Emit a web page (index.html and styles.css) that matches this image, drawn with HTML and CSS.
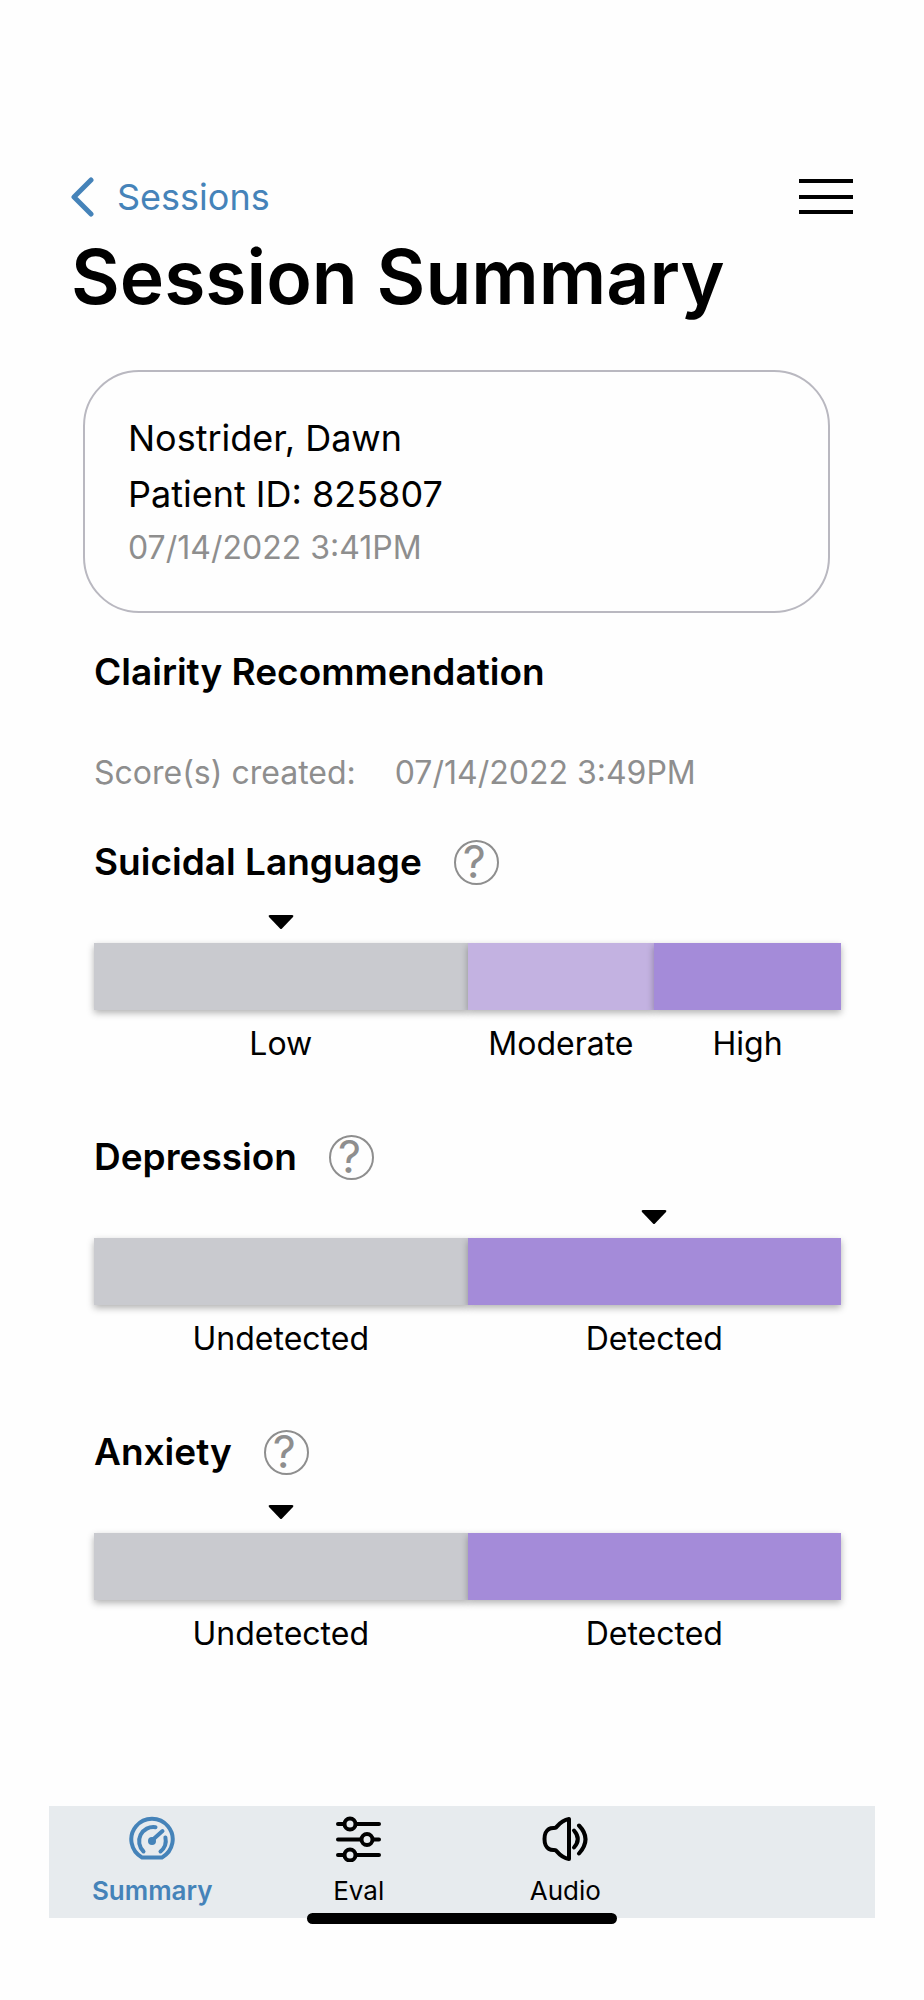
FILE: index.html
```html
<!DOCTYPE html>
<html lang="en">
<head>
<meta charset="utf-8">
<meta name="viewport" content="width=device-width, initial-scale=1">
<title>Session Summary</title>
<link rel="stylesheet" href="styles.css">
</head>
<body>
<div class="screen">
  <header class="header">
    <div class="header-row">
      <a class="back" href="#">
        <svg class="back-icon" viewBox="0 0 24 40" aria-hidden="true"><path d="M20 3 3 20l17 17"/></svg>
        Sessions
      </a>
      <button class="menu" type="button" aria-label="Menu">
        <svg class="menu-icon" viewBox="0 0 54 38" aria-hidden="true"><path d="M0 3h54M0 19h54M0 34h54"/></svg>
      </button>
    </div>
    <h1 class="title">Session Summary</h1>
  </header>

  <main class="content">
    <section class="patient">
      <p class="patient-line">Nostrider, Dawn</p>
      <p class="patient-line">Patient ID: 825807</p>
      <p class="patient-date">07/14/2022 3:41PM</p>
    </section>

    <section class="report">
      <h2 class="heading">Clairity Recommendation</h2>
      <p class="created"><span>Score(s) created:</span><span>07/14/2022 3:49PM</span></p>

      <div class="metrics">
        <section class="metric">
          <div class="metric-head">
            <h3 class="heading">Suicidal Language</h3>
            <button class="help" type="button" aria-label="About Suicidal Language">?</button>
          </div>
          <div class="scale scale-three">
            <svg class="marker" viewBox="0 0 26 16" aria-hidden="true"><path d="M2 1h22q2 0 1 2L14 14.500q-1 1-2 0L1 3q-1-2 1-2z"/></svg>
            <span class="band band-low"></span>
            <span class="band band-mid"></span>
            <span class="band band-high"></span>
            <span class="label">Low</span>
            <span class="label">Moderate</span>
            <span class="label">High</span>
          </div>
        </section>

        <section class="metric">
          <div class="metric-head">
            <h3 class="heading">Depression</h3>
            <button class="help" type="button" aria-label="About Depression">?</button>
          </div>
          <div class="scale scale-two">
            <svg class="marker marker-second" viewBox="0 0 26 16" aria-hidden="true"><path d="M2 1h22q2 0 1 2L14 14.500q-1 1-2 0L1 3q-1-2 1-2z"/></svg>
            <span class="band band-low"></span>
            <span class="band band-high"></span>
            <span class="label">Undetected</span>
            <span class="label">Detected</span>
          </div>
        </section>

        <section class="metric">
          <div class="metric-head">
            <h3 class="heading">Anxiety</h3>
            <button class="help" type="button" aria-label="About Anxiety">?</button>
          </div>
          <div class="scale scale-two">
            <svg class="marker" viewBox="0 0 26 16" aria-hidden="true"><path d="M2 1h22q2 0 1 2L14 14.500q-1 1-2 0L1 3q-1-2 1-2z"/></svg>
            <span class="band band-low"></span>
            <span class="band band-high"></span>
            <span class="label">Undetected</span>
            <span class="label">Detected</span>
          </div>
        </section>
      </div>
    </section>
  </main>

  <nav class="tabs" aria-label="Session">
    <a class="tab tab-active" href="#" aria-current="page">
      <svg class="tab-icon" viewBox="0 0 46 46" aria-hidden="true">
        <path d="M13 41.500A20.700 20.700 0 1 1 33 41.500z"/>
        <path d="M14.500 35.500A14.200 14.200 0 0 1 26.500 11.200M36.400 21.500A14.200 14.200 0 0 1 31.500 35.500M24 23.500l9.500-8.500"/>
        <circle class="solid" cx="23" cy="25" r="4"/>
      </svg>
      Summary
    </a>
    <a class="tab" href="#">
      <svg class="tab-icon" viewBox="0 0 46 46" aria-hidden="true">
        <path d="M2 8h6M20 8h23M2 23.500h23M37 23.500h6M2 39h6M20 39h23"/>
        <circle cx="14" cy="8" r="5.500"/><circle cx="31" cy="23.500" r="5.500"/><circle cx="14" cy="39" r="5.500"/>
      </svg>
      Eval
    </a>
    <a class="tab" href="#">
      <svg class="tab-icon" viewBox="0 0 46 46" aria-hidden="true">
        <path d="M27 3v40C20 42 17 38 14 34.500c-1.500-1-4 .5-7-1.500-3-2-4.500-4-4.500-10S4 15 7 13c3-2 5.500-.5 7-1.500C17 8 20 4 27 3z"/>
        <path d="M32 14.500q7.500 8.500 0 17"/><path d="M37 9.500q13 13.500 0 28"/>
      </svg>
      Audio
    </a>
    <span class="home-indicator"></span>
  </nav>
</div>
</body>
</html>
```
FILE: styles.css
```css
* {
  box-sizing: border-box;
}

body {
  margin: 0;
  background: #fefefe;
  color: #000;
  font-family: Inter, "Liberation Sans", sans-serif;
}

h1, h2, h3, p {
  margin: 0;
}

button {
  border: 0;
  padding: 0;
  background: none;
  font-family: inherit;
  cursor: pointer;
}

a {
  color: inherit;
  text-decoration: none;
}

svg {
  display: block;
  fill: none;
  stroke: currentColor;
}

.screen {
  display: flex;
  flex-direction: column;
  min-height: 100vh;
  padding: 169px 49px 82px;
}

.header {
  display: flex;
  flex-direction: column;
  gap: 8px;
  padding: 0 22px;
}

.header-row {
  display: flex;
  align-items: center;
  justify-content: space-between;
  height: 56px;
}

.back {
  display: flex;
  align-items: center;
  gap: 22px;
  color: #4583b9;
  font-size: 36px;
}

.back-icon {
  width: 24px;
  height: 40px;
  stroke-width: 5;
  stroke-linecap: round;
  stroke-linejoin: round;
}

.menu-icon {
  width: 54px;
  height: 38px;
  stroke-width: 4;
}

.title {
  font-size: 75px;
  font-weight: 600;
  line-height: 88px;
}

.content {
  padding: 49px 34px 0;
}

.patient {
  margin-right: 11px;
  padding: 38px 43px 37px;
  border: 2px solid #b9b8c0;
  border-radius: 56px;
}

.patient-line {
  font-size: 36px;
  line-height: 56px;
}

.patient-date {
  color: #8e8e8e;
  font-size: 32px;
  line-height: 52px;
}

.report {
  padding: 36px 0 0 11px;
}

.heading {
  font-size: 37px;
  font-weight: 600;
  line-height: 46px;
}

.created {
  display: flex;
  gap: 39px;
  margin-top: 54px;
  color: #8e8e8e;
  font-size: 32px;
  line-height: 48px;
}

.metrics {
  display: flex;
  flex-direction: column;
  gap: 69px;
  margin-top: 42px;
}

.metric-head {
  display: flex;
  align-items: center;
  gap: 32px;
}

.help {
  display: flex;
  align-items: center;
  justify-content: center;
  width: 45px;
  height: 45px;
  padding-right: 4px;
  border: 2px solid #8e8e8e;
  border-radius: 50%;
  color: #8e8e8e;
  font-size: 45px;
  line-height: 40px;
}

.scale {
  display: grid;
  grid-template-rows: 16px 67px 42px;
  row-gap: 13px;
  margin-top: 29px;
}

.scale-three {
  grid-template-columns: 2fr 1fr 1fr;
}

.scale-two {
  grid-template-columns: 1fr 1fr;
}

.marker {
  grid-column: 1 / 2;
  grid-row: 1;
  justify-self: center;
  width: 26px;
  height: 16px;
  fill: currentColor;
  stroke: none;
}

.marker-second {
  grid-column: 2 / 3;
}

.band {
  grid-row: 2;
  box-shadow: 0 3px 7px rgba(0, 0, 0, 0.3);
}

.band-low {
  background: #c9cacf;
}

.band-mid {
  background: #c3b2e1;
}

.band-high {
  background: #a48bd9;
}

.label {
  grid-row: 3;
  font-size: 32px;
  line-height: 42px;
  text-align: center;
}

.tabs {
  position: relative;
  display: grid;
  grid-template-columns: repeat(4, 1fr);
  height: 112px;
  margin-top: auto;
  background: #e7ebee;
}

.tab {
  display: flex;
  flex-direction: column;
  align-items: center;
  gap: 11px;
  padding-top: 10px;
  font-size: 26px;
  line-height: 36px;
}

.tab-active {
  color: #4583b9;
  font-weight: 600;
}

.tab-icon {
  width: 46px;
  height: 46px;
  stroke-width: 4;
  stroke-linecap: round;
  stroke-linejoin: round;
}

.solid {
  fill: currentColor;
  stroke: none;
}

.home-indicator {
  position: absolute;
  bottom: -6px;
  left: 50%;
  width: 310px;
  height: 11px;
  border-radius: 6px;
  background: #000;
  transform: translateX(-50%);
}
```
